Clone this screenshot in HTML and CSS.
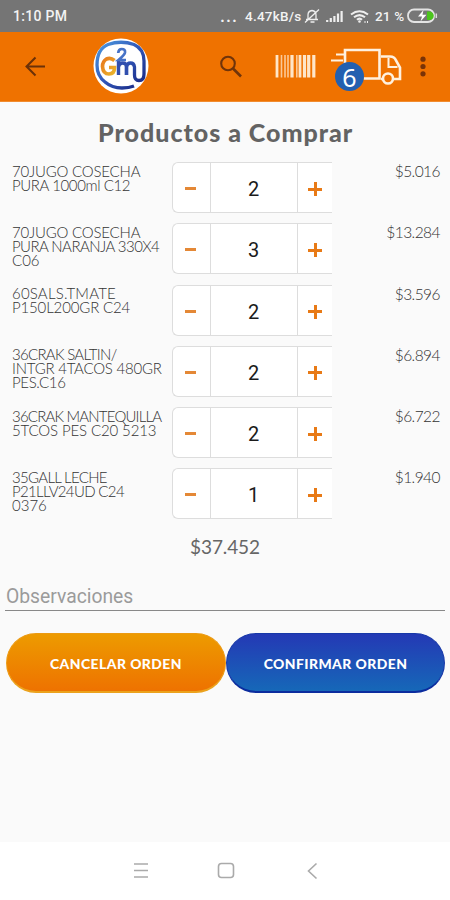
FILE: index.html
```html
<!DOCTYPE html>
<html lang="es">
<head>
<meta charset="utf-8">
<title>Productos a Comprar</title>
<link rel="stylesheet" href="styles.css">
</head>
<body>
<div class="status">
  <span class="clock">1:10 PM</span>
  <span class="dots">...</span>
  <span class="speed">4.47kB/s</span>
  <svg class="status-icons" width="66" height="18" viewBox="0 0 66 18" fill="none" stroke="#eee" stroke-width="1.3">
    <path d="M2 12.500h12M4 12V8q0-4 4-4.500q4 .5 4 4.500V12M6.500 15h4M1 15.500L15 2.500"/>
    <path d="M23.200 15v-2M26.800 15v-4M30.400 15V9M34 15V6.500M37.600 15V4" stroke-width="2.200"/>
    <path d="M47 7.500q8.500-6.500 17 0M50 10.300q5.500-4.500 11 0M53 12.800q2.500-2.500 5 0" stroke-width="2.100"/>
    <circle cx="55.500" cy="14.500" r="1.300" fill="#eee" stroke="none"/>
    <path d="M61 14v2M63.500 14v2" stroke-width="1"/>
  </svg>
  <span class="percent">21 %</span>
  <svg class="battery" width="31" height="16" viewBox="0 0 31 16">
    <rect x="1" y="1.500" width="26" height="12.500" rx="6" fill="#777" stroke="#e4e4e4" stroke-width="1.800"/>
    <path d="M20 3.500h2.500a4.200 4.200 0 0 1 0 8.500H20z" fill="#4bc51d"/>
    <path d="M16.500 2L11 8.500h4L13.500 13.500L19.500 6.800h-4z" fill="#fff"/>
    <path d="M29.300 5.500v4.500" stroke="#ddd" stroke-width="1.500"/>
  </svg>
</div>
<header class="appbar">
  <svg class="appbar-art" width="450" height="70" viewBox="0 0 450 70" fill="none">
    <defs>
      <linearGradient id="ring" x1="0" y1="0" x2="1" y2="1"><stop offset="0" stop-color="#4c9be0"/><stop offset=".5" stop-color="#3156b8"/><stop offset="1" stop-color="#17257f"/></linearGradient>
      <linearGradient id="gold" x1="0" y1="0" x2="1" y2="1"><stop offset="0" stop-color="#e8781c"/><stop offset="1" stop-color="#eab52c"/></linearGradient>
    </defs>
    <path d="M45 34.500H27M35.500 25.500l-9 9 9 9" stroke="#6b3108" stroke-width="2"/>
    <circle cx="121" cy="34" r="27.500" fill="#fff"/>
    <path d="M134 54Q129 56 122 56Q112 56 105 50Q97 44 97 33Q97 17 108 12.500Q121 8 134 12.500Q144 17 144 29V42Q144 48.500 139 48.500Q134.500 48.500 134.500 43V35Q134 31 130.500 31Q127 31 126.500 35V43" stroke="url(#ring)" stroke-width="3.300"/>
    <path d="M114.500 28.500Q110.500 25 106.500 27Q102.500 29.500 102.500 34.500Q103 42 109 42Q114.500 42 114.500 35.500H109" stroke="url(#gold)" stroke-width="3.700"/>
    <path d="M118.500 43V29M118.500 35Q119 31 122.500 31Q126.500 31 126.500 35V43" stroke="#314fae" stroke-width="3.400"/>
    <path d="M118.200 21Q118.500 17 121.800 17Q125.500 17 125 20.500Q124.500 23 118.500 28H126" stroke="#4672c7" stroke-width="2.700"/>
    <circle cx="228" cy="31.500" r="6.800" stroke="#70340a" stroke-width="2.100"/>
    <path d="M233 36.500l8 8" stroke="#70340a" stroke-width="2.600"/>
    <g stroke="#ffe6c8">
      <path d="M277 23v22.500M300 23v22.500" stroke-width="2.800"/>
      <path d="M281.500 23v22.500M285 23v22.500M288 23v22.500M296.800 23v22.500" stroke-width="1.600" opacity=".75"/>
      <path d="M292 23v22.500M304.500 23v22.500M308.700 23v22.500M313.800 23v22.500" stroke-width="3.200"/>
    </g>
    <g stroke="#fff1df" stroke-width="2.600">
      <path d="M345 34V18h34.500v28.500h-16"/>
      <path d="M381 24.500h9q4.500 0 6 4l4 7v11.500h-6M381 47h2"/>
      <path d="M388.500 26v9h9" stroke-width="2"/>
      <circle cx="388" cy="46.500" r="5"/>
      <path d="M336 22.500h8M331 28.500h12" stroke-width="2"/>
    </g>
    <g fill="#793307"><circle cx="423" cy="27.200" r="2.600"/><circle cx="423" cy="34.500" r="2.600"/><circle cx="423" cy="41.800" r="2.600"/></g>
  </svg>
  <span class="badge">6</span>
</header>
<main>
  <h1>Productos a Comprar</h1>
  <section class="list">
    <div class="row"><p><span class="t1">70JUGO COSECHA</span><span class="t2">PURA 1000ml C12</span></p><div class="stepper"><b class="minus"></b><span>2</span><b class="plus"></b></div><em>$5.016</em></div>
    <div class="row"><p><span class="t1">70JUGO COSECHA</span><span class="t3">PURA NARANJA 330X4</span><span class="short">C06</span></p><div class="stepper"><b class="minus"></b><span>3</span><b class="plus"></b></div><em>$13.284</em></div>
    <div class="row"><p><span class="t4">60SALS.TMATE</span><span class="t5">P150L200GR C24</span></p><div class="stepper"><b class="minus"></b><span>2</span><b class="plus"></b></div><em>$3.596</em></div>
    <div class="row"><p><span class="t6">36CRAK SALTIN/</span><span class="t7">INTGR 4TACOS 480GR</span><span class="t8">PES.C16</span></p><div class="stepper"><b class="minus"></b><span>2</span><b class="plus"></b></div><em>$6.894</em></div>
    <div class="row"><p><span class="t9">36CRAK MANTEQUILLA</span><span class="t10">5TCOS PES C20 5213</span></p><div class="stepper"><b class="minus"></b><span>2</span><b class="plus"></b></div><em>$6.722</em></div>
    <div class="row"><p><span class="t11">35GALL LECHE</span><span class="t12">P21LLV24UD C24</span><span class="short">0376</span></p><div class="stepper"><b class="minus"></b><span>1</span><b class="plus"></b></div><em>$1.940</em></div>
  </section>
  <div class="total">$37.452</div>
  <div class="notes">Observaciones</div>
  <div class="actions">
    <button class="cancel">CANCELAR ORDEN</button>
    <button class="confirm">CONFIRMAR ORDEN</button>
  </div>
</main>
<nav>
  <svg width="450" height="58" viewBox="0 0 450 58" fill="none" stroke="#aaa" stroke-width="1.600">
    <path d="M134 22h14M134 28.500h14M134 35h14"/>
    <rect x="218.500" y="21.500" width="15" height="14" rx="3"/>
    <path d="M316.500 21.500l-8 7.500 8 7.500"/>
  </svg>
</nav>
</body>
</html>
```
FILE: styles.css
```css
* { box-sizing: border-box; }
body { margin: 0; width: 450px; height: 900px; background: #fafafa; font-family: Lato, "Liberation Sans", sans-serif; color: #666; display: flex; flex-direction: column; overflow: hidden; }
.status { height: 32px; background: #757575; color: #f3f3f3; font: 500 13.5px/32px Roboto, sans-serif; display: flex; align-items: center; padding: 0 11px 0 13px; white-space: nowrap; }
.clock { width: 207px; font-size: 14px; letter-spacing: .3px; }
.dots { width: 25px; font-size: 18px; line-height: 26px; letter-spacing: 1px; }
.speed { width: 58px; letter-spacing: .25px; }
.status-icons { flex: none; width: 66px; margin-left: 1px; }
.percent { width: 33px; margin-left: 5px; margin-right: -1px; letter-spacing: .2px; }
.battery { flex: none; }
.appbar { height: 70px; background: #ef7200; position: relative; border-bottom: 1px solid #f18c30; }
.appbar-art { display: block; }
.badge { position: absolute; left: 335px; top: 30px; width: 29px; height: 29px; border-radius: 50%; background: #2360b0; color: #fff; font: 25px/30px "Noto Sans", sans-serif; text-align: center; }
main { height: 740px; }
h1 { margin: 0; padding-left: 98px; height: 60px; font-size: 25px; font-weight: 900; line-height: 61px; letter-spacing: .98px; white-space: nowrap; color: #636363; }
.row { display: grid; grid-template-columns: 160px 162px 1fr; height: 61.3px; padding: 0 10px 0 12px; }
.row p { margin: 0; padding-top: 1.500px; font-size: 15px; font-weight: 300; line-height: 14px; color: #333; white-space: nowrap; }
.row p span { display: block; }
.t1 { letter-spacing: -.2px; }
.t2 { letter-spacing: -.38px; }
.t3 { letter-spacing: -.55px; }
.t4 { letter-spacing: .2px; }
.t5 { letter-spacing: -.15px; }
.t6 { letter-spacing: -.7px; }
.t7 { letter-spacing: -.22px; }
.t8 { letter-spacing: -.35px; }
.t9 { letter-spacing: -.8px; }
.t10 { letter-spacing: -.12px; }
.t11 { letter-spacing: -.7px; }
.t12 { letter-spacing: -.65px; }
.short { letter-spacing: 0; }
.stepper { height: 51px; width: 160px; border: 1px solid #ddd; border-right: 0; border-radius: 6px 0 0 6px; background: #fff; display: grid; grid-template-columns: 37px 88px 1fr; grid-template-rows: 49px; }
.stepper span { border: solid #ddd; border-width: 0 1px; text-align: center; font: 20px/52px Roboto, sans-serif; color: #1b1b1b; padding-right: 1px; }
.minus, .plus { align-self: center; justify-self: center; width: 11px; height: 3px; background: #e48836; }
.minus { margin: 2px 2px 0 0; }
.plus { margin-top: 3px; width: 14px; height: 14px; background: linear-gradient(#e87a16, #e87a16) center / 14px 3px no-repeat, linear-gradient(#e87a16, #e87a16) center / 3px 14px no-repeat; }
.row em { font-style: normal; font-weight: 300; font-size: 15.500px; line-height: 18px; text-align: right; letter-spacing: -.55px; color: #333; }
.total { height: 39px; text-align: center; font-size: 19px; line-height: 34px; letter-spacing: -.1px; }
.notes { margin: 9px 5px 0; height: 33px; line-height: 38px; padding-left: 1px; border-bottom: 1px solid #888; font-family: Roboto, sans-serif; font-size: 19.300px; color: #9b9b9b; }
.actions { display: grid; grid-template-columns: 220px 219px; margin: 22px 5px 0 6px; }
button { height: 60px; border-radius: 30px; color: #fff; font: 900 13.900px Lato, sans-serif; letter-spacing: .45px; padding: 2px 0 0; white-space: nowrap; }
.cancel { border: 1px solid #ec9a12; border-bottom: 2px solid #eba21d; background: linear-gradient(#ed9b00, #ee7200); }
.confirm { border: 1px solid #1738a8; border-bottom: 2px solid #0b2c9e; background: linear-gradient(#2439b5, #1668b8); }
nav { height: 58px; background: #fff; }
nav svg { display: block; }
```
